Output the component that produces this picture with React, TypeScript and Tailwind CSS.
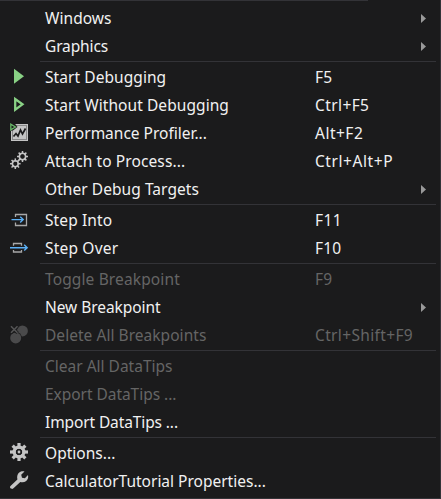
import type { ReactNode } from 'react';

type Item = { label: string; track: string; keys?: string; keyTrack?: string; sub?: boolean; off?: boolean; icon?: ReactNode };

function Gear({ cx, cy, r, hole, teeth, body, tw, dot }: { cx: number; cy: number; r: number; hole: number; teeth: number; body: number; tw: number; dot?: number }) {
  return (
    <g>
      {Array.from({ length: teeth }, (_, i) => (
        <rect key={i} x={cx - tw / 2} y={cy - r} width={tw} height={r - hole} fill="#c4c4c4" transform={`rotate(${(360 / teeth) * i} ${cx} ${cy})`} />
      ))}
      <circle cx={cx} cy={cy} r={(body + hole) / 2} fill="none" stroke="#c4c4c4" strokeWidth={body - hole} />
      {dot ? <circle cx={cx} cy={cy} r={dot} fill="#c4c4c4" /> : null}
    </g>
  );
}

const play = <path d="M14 5.8V20.8L24 13.3Z" fill="#89d185" />;
const playOutline = <path d="M15.2 8V18.7L22.5 13.3Z" fill="none" stroke="#89d185" strokeWidth="2.3" />;
const profiler = (
  <g>
    <rect x="11" y="5" width="17" height="17" fill="#c4c4c4" />
    <rect x="12.5" y="6.5" width="14" height="14" fill="none" stroke="#8a8a8a" strokeWidth="1" />
    <path d="M13.5 17.5L16 14.5L18 17L20.5 11L22.5 15L25.5 9.5" fill="none" stroke="#1b1b1c" strokeWidth="1.7" />
    <path d="M9.5 3.5H14L17.5 8L13 11.5L9.5 12Z" fill="#1b1b1c" />
    <path d="M10.8 5.2V10.8L15.4 8Z" fill="none" stroke="#6ab96a" strokeWidth="1.3" />
  </g>
);
const gears = (
  <g>
    <Gear cx={22.5} cy={9.5} r={5.5} body={3.9} hole={2.4} teeth={8} tw={1.5} />
    <Gear cx={15.3} cy={16.7} r={5.3} body={3.7} hole={2.2} teeth={8} tw={1.5} />
  </g>
);
const stepInto = (
  <g fill="none">
    <path d="M15.5 11V8.5H26.5V19.5H15.5V16.5" stroke="#a8a8a8" strokeWidth="1.3" />
    <path d="M11.5 13.6H23M20.2 10.7L23.2 13.6L20.2 16.5" stroke="#5cb0f5" strokeWidth="1.4" />
  </g>
);
const stepOver = (
  <g fill="none">
    <path d="M13.5 11.7V9.5H21.5V11.7M13.5 16V18H21.5V16" stroke="#a8a8a8" strokeWidth="1.3" />
    <path d="M10 13.7H27M24.2 10.8L27.2 13.7L24.2 16.6" stroke="#5cb0f5" strokeWidth="1.4" />
  </g>
);
const breakpoints = (
  <g>
    <circle cx="22.4" cy="9.9" r="5.5" fill="#4a4a4b" />
    <circle cx="15.7" cy="16.9" r="6.1" fill="#1b1b1c" />
    <circle cx="15.7" cy="16.9" r="5.5" fill="#4a4a4b" />
    <path d="M11 5.3L17.5 11.8M17.5 5.3L11 11.8" stroke="#1b1b1c" strokeWidth="3.2" />
    <path d="M11 5.3L17.5 11.8M17.5 5.3L11 11.8" stroke="#555556" strokeWidth="1.5" />
  </g>
);
const options = <Gear cx={19} cy={13} r={9} body={6.5} hole={3.3} teeth={8} tw={3.2} dot={1.4} />;
const wrench = (
  <path d="M10.5 19.1L17.4 12.4C16.7 9.6 17.4 7 19.2 5.6C20.8 4.2 22.7 3.9 24.5 4.4L21.2 7.8L22 10.7L24.9 11.2L28 8C28.6 10.4 27.8 12.7 26.2 14C24.5 15.3 22.3 15.5 20.3 14.9L13.2 21.6C11.6 23 9 20.6 10.5 19.1Z" fill="#c4c4c4" />
);

const groups: Item[][] = [
  [
    { label: 'Windows', track: 'tracking-[0.05px]', sub: true },
    { label: 'Graphics', track: 'tracking-[-0.13px]', sub: true },
  ],
  [
    { label: 'Start Debugging', track: 'tracking-[0.07px]', keys: 'F5', keyTrack: 'tracking-[0.2px]', icon: play },
    { label: 'Start Without Debugging', track: 'tracking-[0.07px]', keys: 'Ctrl+F5', keyTrack: 'tracking-[0.4px]', icon: playOutline },
    { label: 'Performance Profiler...', track: 'tracking-normal', keys: 'Alt+F2', keyTrack: 'tracking-[0.5px]', icon: profiler },
    { label: 'Attach to Process...', track: 'tracking-[0.1px]', keys: 'Ctrl+Alt+P', keyTrack: 'tracking-[0.57px]', icon: gears },
    { label: 'Other Debug Targets', track: 'tracking-[0.06px]', sub: true },
  ],
  [
    { label: 'Step Into', track: 'tracking-[0.1px]', keys: 'F11', keyTrack: 'tracking-[0.4px]', icon: stepInto },
    { label: 'Step Over', track: 'tracking-[0.19px]', keys: 'F10', keyTrack: 'tracking-[0.2px]', icon: stepOver },
  ],
  [
    { label: 'Toggle Breakpoint', track: 'tracking-[0.13px]', keys: 'F9', keyTrack: 'tracking-[0.2px]', off: true },
    { label: 'New Breakpoint', track: 'tracking-[-0.06px]', sub: true },
    { label: 'Delete All Breakpoints', track: 'tracking-[0.04px]', keys: 'Ctrl+Shift+F9', keyTrack: 'tracking-[0.35px]', off: true, icon: breakpoints },
  ],
  [
    { label: 'Clear All DataTips', track: 'tracking-normal', off: true },
    { label: 'Export DataTips ...', track: 'tracking-[-0.04px]', off: true },
    { label: 'Import DataTips ...', track: 'tracking-[-0.11px]' },
  ],
  [
    { label: 'Options...', track: 'tracking-[0.03px]', icon: options },
    { label: 'CalculatorTutorial Properties...', track: 'tracking-normal', icon: wrench },
  ],
];

function Row({ item }: { item: Item }) {
  return (
    <div className={`flex h-7 items-center ${item.off ? 'text-[#656565]' : 'text-[#f1f1f1]'}`}>
      <svg className="h-7 w-[45px] shrink-0" viewBox="0 0 45 28">{item.icon}</svg>
      <span className={`w-[270px] shrink-0 ${item.track}`}>{item.label}</span>
      <span className={`w-[106px] shrink-0 ${item.keyTrack ?? ''}`}>{item.keys}</span>
      {item.sub && (
        <svg className="h-7 w-2" viewBox="0 0 8 28"><path d="M0 10V19L5 14.5Z" fill="#999" /></svg>
      )}
    </div>
  );
}

export default function App() {
  return (
    <div className="flex h-[499px] w-[441px] flex-col overflow-hidden border-r border-b border-[#333337] bg-[#1b1b1c] font-['Noto_Sans',sans-serif] text-[15.5px] leading-7 whitespace-pre">
      <div className="mb-[3px] h-px w-[368px] shrink-0 bg-[#333337]" />
      {groups.map((group, i) => (
        <div key={i}>
          {i > 0 && <div className="mt-px mr-1 mb-px ml-10 h-px bg-[#333337]" />}
          {group.map((item) => <Row key={item.label} item={item} />)}
        </div>
      ))}
    </div>
  );
}
